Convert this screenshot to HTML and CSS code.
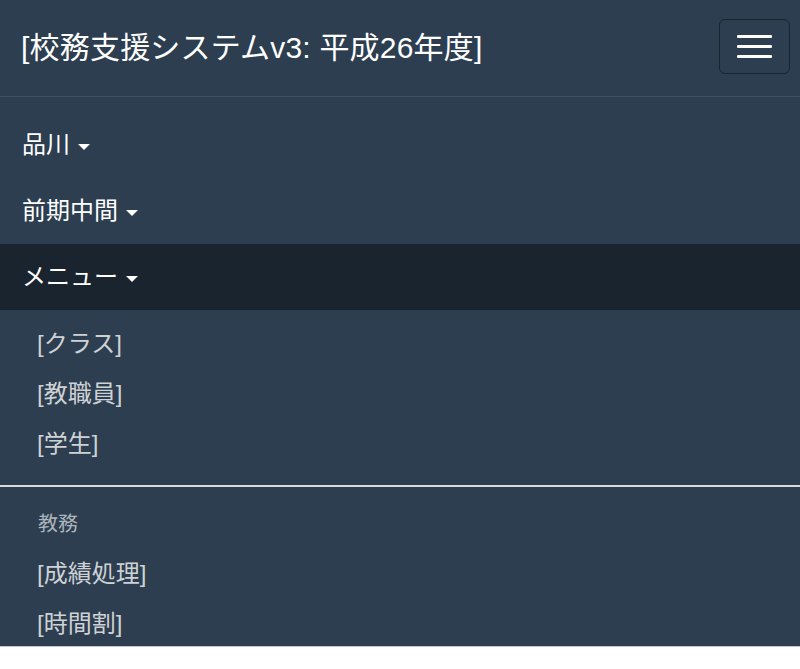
FILE: index.html
```
<!DOCTYPE html>
<html lang="ja">
<head>
    <meta charset="UTF-8">
    <meta name="viewport" content="width=device-width, initial-scale=1.0">
    <title>校務支援システムv3</title>
    <link rel="stylesheet" href="styles.css">
</head>
<body>
    <nav class="navbar">
        <div class="navbar-header">
            <a class="brand" href="#">[校務支援システムv3: 平成26年度]</a>
            <!-- menu toggle for the collapsed view -->
            <button type="button" class="toggle">
                <span class="bar"></span>
                <span class="bar"></span>
                <span class="bar"></span>
            </button>
        </div>

        <ul class="nav">
            <li><a href="#">品川 <span class="caret"></span></a></li>
            <li><a href="#">前期中間 <span class="caret"></span></a></li>
            <li class="open">
                <a class="active" href="#">メニュー <span class="caret"></span></a>
                <ul class="dropdown">
                    <li><a href="#">[クラス]</a></li>
                    <li><a href="#">[教職員]</a></li>
                    <li><a href="#">[学生]</a></li>
                    <li class="divider"></li>
                    <li class="dropdown-header">教務</li>
                    <li><a href="#">[成績処理]</a></li>
                    <li><a href="#">[時間割]</a></li>
                </ul>
            </li>
        </ul>
    </nav>
</body>
</html>
```

FILE: styles.css
```
* {
    box-sizing: border-box;
}

body {
    margin: 0;
    background-color: #fff;
    font-family: "Liberation Sans", "Noto Sans CJK JP", sans-serif;
}

a {
    text-decoration: none;
}

.navbar {
    background-color: #2c3e50;
    height: 647px;
    overflow: hidden;
    border-bottom: 1px solid #c5cad0;
}

.navbar-header {
    height: 97px;
    padding: 0 10px 0 21px;
    display: flex;
    align-items: center;
    justify-content: space-between;
    border-bottom: 1px solid #3e5063;
}

.brand {
    color: #fff;
    font-size: 30px;
    margin-top: -6px;
    letter-spacing: 0.2px;
}

.toggle {
    width: 71px;
    height: 55px;
    margin-top: -4px;
    border: 1px solid #1a242f;
    border-radius: 6px;
    background-color: transparent;
    display: flex;
    flex-direction: column;
    align-items: center;
    justify-content: center;
    gap: 7px;
    padding: 0;
}

.toggle .bar {
    display: block;
    width: 35px;
    height: 3px;
    border-radius: 1px;
    background-color: #fff;
}

.nav,
.dropdown {
    list-style: none;
    margin: 0;
    padding: 0;
}

.nav {
    margin-top: 15px;
}

.nav > li > a {
    display: block;
    height: 66px;
    line-height: 66px;
    padding-left: 22px;
    color: #fff;
    font-size: 24px;
}

.nav > li > a.active {
    background-color: #1a242f;
}

.caret {
    display: inline-block;
    width: 0;
    height: 0;
    margin-left: 1px;
    vertical-align: middle;
    border-top: 6px solid #fff;
    border-left: 6px solid transparent;
    border-right: 6px solid transparent;
}

.dropdown {
    padding-top: 9px;
}

.dropdown a {
    display: block;
    line-height: 50px;
    padding-left: 37px;
    color: #cfd2d5;
    font-size: 24px;
}

.divider {
    height: 2px;
    margin: 16px 0 12px;
    background-color: #d8dbde;
}

.dropdown-header {
    line-height: 50px;
    padding-left: 38px;
    color: #aeb5bd;
    font-size: 20px;
}
```
